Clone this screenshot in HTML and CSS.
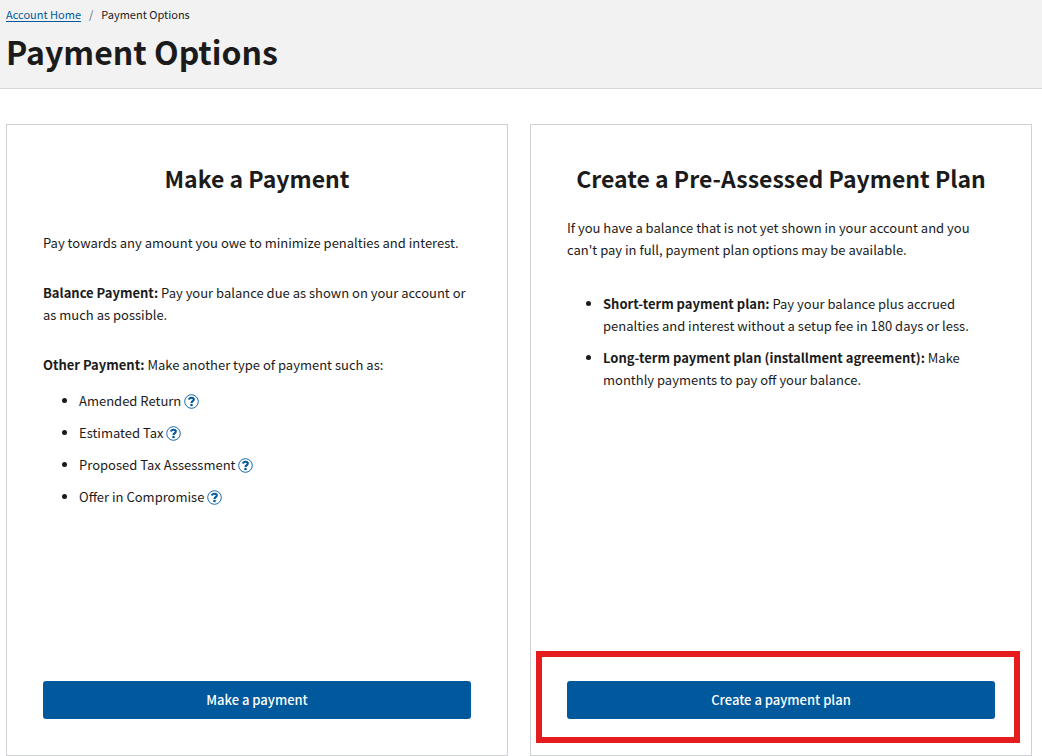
FILE: index.html
```html
<!DOCTYPE html>
<html lang="en">
<head>
<meta charset="utf-8">
<meta name="viewport" content="width=device-width, initial-scale=1">
<title>Payment Options</title>
<link rel="stylesheet" href="styles.css">
</head>
<body>
<svg class="sprite" aria-hidden="true">
  <symbol id="help" viewBox="0 0 15 15">
    <circle cx="7.5" cy="7.5" r="6.8" fill="none" stroke="currentColor" stroke-width="0.9"/>
    <path d="M4.9 5.6C5.2 4.3 6.2 3.8 7.6 3.8C9 3.8 9.8 4.5 9.8 5.5C9.8 7.1 7.5 7.1 7.5 8.9" fill="none" stroke="currentColor" stroke-width="2.1"/>
    <circle cx="7.5" cy="11" r="1.3" fill="currentColor"/>
  </symbol>
</svg>
<header class="page-header">
  <nav aria-label="Breadcrumb">
    <ol class="breadcrumb">
      <li><a href="#">Account Home</a></li>
      <li aria-current="page">Payment Options</li>
    </ol>
  </nav>
  <h1 class="page-title">Payment Options</h1>
</header>
<main class="options">
  <section class="card">
    <h2 class="card-title">Make a Payment</h2>
    <div class="card-body card-body-spaced">
      <p>Pay towards any amount you owe to minimize penalties and interest.</p>
      <p><strong>Balance Payment:</strong> Pay your balance due as shown on your account or as much as possible.</p>
      <div class="payment-types">
        <p><strong>Other Payment:</strong> Make another type of payment such as:</p>
        <ul class="list">
          <li>Amended Return <button class="help" type="button" aria-label="About amended returns"><svg><use href="#help"/></svg></button></li>
          <li>Estimated Tax <button class="help" type="button" aria-label="About estimated tax"><svg><use href="#help"/></svg></button></li>
          <li>Proposed Tax Assessment <button class="help" type="button" aria-label="About proposed tax assessments"><svg><use href="#help"/></svg></button></li>
          <li>Offer in Compromise <button class="help" type="button" aria-label="About offers in compromise"><svg><use href="#help"/></svg></button></li>
        </ul>
      </div>
    </div>
    <div class="card-action"><button class="button" type="button">Make a payment</button></div>
  </section>
  <section class="card">
    <h2 class="card-title">Create a Pre-Assessed Payment Plan</h2>
    <div class="card-body">
      <p>If you have a balance that is not yet shown in your account and you can't pay in full, payment plan options may be available.</p>
      <ul class="list">
        <li><strong>Short-term payment plan:</strong> Pay your balance plus accrued penalties and interest without a setup fee in 180 days or less.</li>
        <li><strong>Long-term payment plan (installment agreement):</strong> Make monthly payments to pay off your balance.</li>
      </ul>
    </div>
    <div class="card-action highlighted"><button class="button" type="button">Create a payment plan</button></div>
  </section>
</main>
</body>
</html>
```
FILE: styles.css
```css
* {
  box-sizing: border-box;
}

body {
  display: flex;
  flex-direction: column;
  min-height: 100vh;
  margin: 0;
  background: #fff;
  color: #1b1b1b;
  font: 13px/22px "Noto Sans CJK SC", "Noto Sans", sans-serif;
}

h1, h2, p, ul, ol {
  margin: 0;
  padding: 0;
}

.sprite {
  position: absolute;
  width: 0;
  height: 0;
}

.page-header {
  padding: 3px 6px 11px;
  background: #f2f2f2;
  border-bottom: 1px solid #d6d7d9;
}

.breadcrumb {
  display: flex;
  list-style: none;
  font-size: 11px;
}

.breadcrumb li + li::before {
  content: "/";
  margin: 0 8px;
  color: #5b616b;
}

.breadcrumb a {
  color: #00599c;
  text-underline-offset: 2px;
}

.page-title {
  font-size: 32px;
  line-height: 52px;
}

.options {
  display: grid;
  flex: 1;
  grid-template-columns: 1fr 1fr;
  gap: 22px;
  padding: 35px 10px 0 6px;
}

.card {
  display: flex;
  flex-direction: column;
  padding: 36px;
  border: 1px solid #cfd1d4;
}

.card-title {
  font-size: 23px;
  line-height: 34px;
  text-align: center;
}

.card-body {
  display: flex;
  flex: 1;
  flex-direction: column;
  gap: 32px;
  padding: 22px 0;
}

.card-body-spaced {
  gap: 28px;
  padding-top: 37px;
}

.list {
  display: grid;
  gap: 10px;
  padding-left: 36px;
}

.payment-types {
  display: grid;
  gap: 14px;
}

.help {
  margin-bottom: 2px;
  padding: 0;
  border: 0;
  background: none;
  color: #00599c;
  vertical-align: middle;
}

.help svg {
  display: block;
  width: 15px;
  height: 15px;
}

.button {
  width: 100%;
  height: 38px;
  border: 0;
  border-radius: 3px;
  background: #00599c;
  color: #fff;
  font: 500 13px/22px "Noto Sans CJK SC", "Noto Sans", sans-serif;
}

.highlighted {
  position: relative;
}

.highlighted::after {
  position: absolute;
  inset: -30px -25px -24px -31px;
  border: 6px solid #e51c1e;
  content: "";
  pointer-events: none;
}

@media (max-width: 700px) {
  .options {
    grid-template-columns: 1fr;
  }
}
```
